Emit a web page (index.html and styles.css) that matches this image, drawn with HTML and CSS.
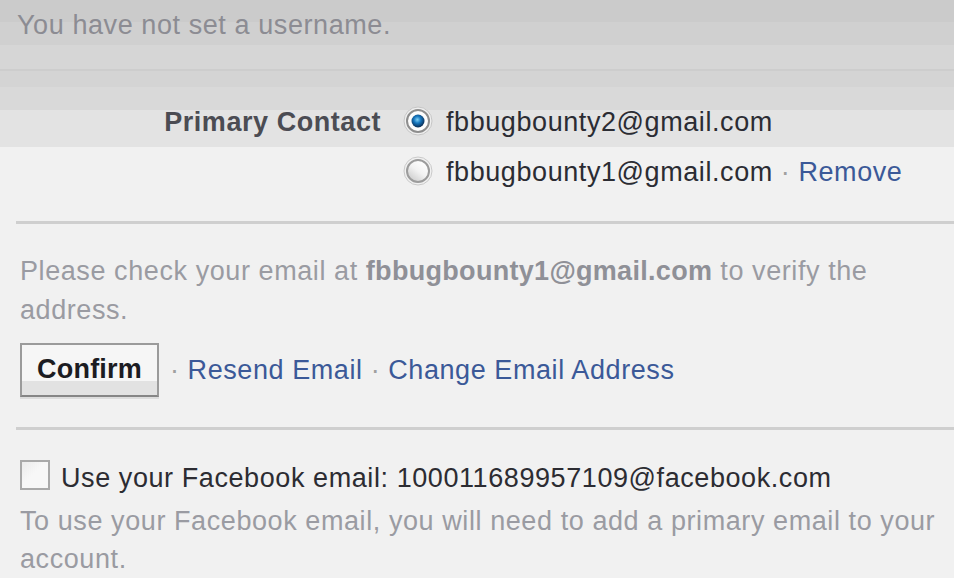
FILE: index.html
```html
<!DOCTYPE html>
<html lang="en">

<head>
    <meta charset="UTF-8" />
    <meta name="viewport" content="width=device-width, initial-scale=1.0" />
    <title>Email Settings</title>
    <link rel="stylesheet" href="styles.css">
</head>

<body>
    <div class="username">You have not set a username.</div>

    <div class="contacts">
        <div class="contact-row">
            <span class="contact-label">Primary Contact</span>
            <svg class="radio" width="30" height="30" viewBox="0 0 30 30">
                <defs>
                    <radialGradient id="dot" cx="45%" cy="40%" r="60%">
                        <stop offset="0" stop-color="#7fd0f5" />
                        <stop offset="0.45" stop-color="#1677bf" />
                        <stop offset="1" stop-color="#0a2a50" />
                    </radialGradient>
                </defs>
                <circle cx="15" cy="15" r="14" fill="#efefef" stroke="#c6c6c6" stroke-width="1" />
                <circle cx="15" cy="15" r="11" fill="#fdfdfd" stroke="#8e8e8e" stroke-width="2" />
                <circle cx="15" cy="15" r="6.5" fill="url(#dot)" />
            </svg>
            <span class="contact-email">fbbugbounty2@gmail.com</span>
        </div>
        <div class="contact-row">
            <span class="contact-label"></span>
            <svg class="radio" width="30" height="30" viewBox="0 0 30 30">
                <defs>
                    <linearGradient id="blank" x1="0.8" y1="0.1" x2="0.2" y2="0.9">
                        <stop offset="0" stop-color="#ffffff" />
                        <stop offset="0.5" stop-color="#f2f2f2" />
                        <stop offset="1" stop-color="#cfcfcf" />
                    </linearGradient>
                </defs>
                <circle cx="15" cy="15" r="14" fill="#f1f1f1" stroke="#cacaca" stroke-width="1" />
                <circle cx="15" cy="15" r="11" fill="url(#blank)" stroke="#9c9c9c" stroke-width="2" />
            </svg>
            <span class="contact-email">fbbugbounty1@gmail.com</span>
            <span class="sep">&middot;</span>
            <a href="#" class="link">Remove</a>
        </div>
    </div>

    <div class="section">
        <p class="note">Please check your email at <b>fbbugbounty1@gmail.com</b> to verify the address.</p>
        <div class="actions">
            <button class="btn">Confirm</button>
            <span class="sep">&middot;</span>
            <a href="#" class="link">Resend Email</a>
            <span class="sep">&middot;</span>
            <a href="#" class="link">Change Email Address</a>
        </div>
    </div>

    <div class="section section-last">
        <label class="check-row">
            <span class="checkbox"></span>
            Use your Facebook email: 100011689957109@facebook.com
        </label>
        <p class="note note-tight">To use your Facebook email, you will need to add a primary email to your account.</p>
    </div>
</body>

</html>
```

FILE: styles.css
```css
body {
    margin: 0;
    padding: 0;
    font-family: "Liberation Sans", Arial, sans-serif;
    font-size: 27px;
    letter-spacing: 0.58px;
    color: #333;
    background-color: #f1f1f1;
    background-image: linear-gradient(to bottom,
            #cbcbcb 0, #cbcbcb 22px,
            #d0d0d0 22px, #d0d0d0 45px,
            #d6d6d6 45px, #d6d6d6 69px,
            #cdcdcd 69px, #cdcdcd 71px,
            #d4d4d4 71px, #d4d4d4 87px,
            #d9d9d9 87px, #d9d9d9 110px,
            #e3e3e3 110px, #e3e3e3 147px,
            #f1f1f1 147px);
    background-repeat: no-repeat;
    overflow: hidden;
}

.username {
    padding: 5px 0 0 17px;
    line-height: 40px;
    color: #8c8c93;
}

.contacts {
    margin-top: 52px;
}

.contact-row {
    display: flex;
    align-items: center;
    height: 50px;
    line-height: 50px;
}

.contact-label {
    width: 381px;
    text-align: right;
    font-weight: bold;
    letter-spacing: 0.55px;
    color: #4b4c53;
}

.radio {
    margin: 0 13px 3px 22px;
    flex-shrink: 0;
}

.contact-email {
    color: #2b2c33;
}

.sep {
    padding: 0 8px;
    color: #a0a0a0;
}

.link {
    color: #3b5998;
    text-decoration: none;
}

.section {
    margin: 24px 0 0 16px;
    padding: 28px 8px 0 4px;
    border-top: 3px solid #cfcfcf;
}

.section-last {
    margin-top: 30px;
}

.note {
    margin: 0;
    line-height: 39px;
    color: #9a9ba2;
}

.note b {
    letter-spacing: 0.3px;
    color: #8f9097;
}

.note-tight {
    margin-top: 4px;
    line-height: 38px;
}

.actions {
    display: flex;
    align-items: center;
    margin-top: 13px;
}

.btn {
    box-sizing: border-box;
    height: 54px;
    width: 139px;
    padding: 0 0 2px 0;
    border: 2px solid #9b9b9b;
    border-bottom-color: #858585;
    background: linear-gradient(to bottom, #f6f6f6 0, #f6f6f6 36px, #e2e2e2 36px);
    box-shadow: 0 2px 0 #dcdcdc;
    font-family: "Liberation Sans", Arial, sans-serif;
    font-size: 27px;
    font-weight: bold;
    letter-spacing: 0.2px;
    color: #1c1c22;
    margin-right: 3px;
}

.check-row {
    display: flex;
    align-items: center;
    line-height: 40px;
    color: #2c2c32;
}

.checkbox {
    box-sizing: border-box;
    width: 30px;
    height: 30px;
    margin: 0 11px 6px 0;
    border: 2px solid #a9a9a9;
    background: linear-gradient(135deg, #ebebeb 0, #f7f7f7 45%, #f7f7f7 100%);
    flex-shrink: 0;
}
```
